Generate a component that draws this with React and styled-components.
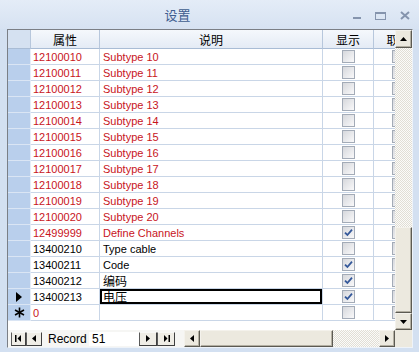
import React from "react";
import styled, { createGlobalStyle } from "styled-components";

const GlobalStyle = createGlobalStyle`
  html, body { margin: 0; padding: 0; }
  body {
    width: 419px;
    height: 352px;
    overflow: hidden;
    background: #d3e0f1;
    font-family: "Liberation Sans", Arial, sans-serif;
  }
`;

const COLS = "23px 69px 223px 51px 50px";
const RED = "#c8141c";

const records = [
	...Array.from({ length: 11 }, (_, i) => ({
		id: String(12100010 + i),
		desc: "Subtype " + (10 + i),
		red: true,
		show: false,
	})),
	{ id: "12499999", desc: "Define Channels", red: true, show: true },
	{ id: "13400210", desc: "Type cable", show: false },
	{ id: "13400211", desc: "Code", show: true },
	{ id: "13400212", desc: "编码", cjk: true, show: true },
	{ id: "13400213", desc: "电压", cjk: true, show: true, current: true },
];

const Window = styled.div`
	width: 419px;
	height: 352px;
	display: flex;
	flex-direction: column;
`;

const TitleBar = styled.div`
	height: 29px;
	display: flex;
	align-items: center;
	background: linear-gradient(#e4ecf7, #d6e2f2);
`;

const Title = styled.div`
	flex: 1;
	text-align: center;
	font: 13px "Noto Sans CJK SC", sans-serif;
	color: #3e5d8f;
	padding-left: 2px;
`;

const Controls = styled.div`
	display: flex;
	align-items: center;
	gap: 14px;
	padding: 2px 9px 0 0;
	color: #8594ad;
`;

const Frame = styled.div`
	margin: 0 6px 0 7px;
	height: 319px;
	box-sizing: border-box;
	border: 1px solid;
	border-color: #7b7f86 #eef3f9 #eef3f9 #7b7f86;
	display: flex;
	flex-direction: column;
`;

const Top = styled.div`
	height: 300px;
	display: flex;
`;

const Viewport = styled.div`
	width: 387px;
	overflow: hidden;
	background: #fff;
`;

const Row = styled.div`
	display: grid;
	grid-template-columns: ${COLS};
	width: 416px;
	height: ${(p) => (p.$head ? 19 : 16)}px;
`;

const HeadCell = styled.div`
	box-sizing: border-box;
	border-right: 1px solid #b7c7dc;
	border-bottom: 1px solid #a9bcd5;
	background: ${(p) => (p.$corner ? "#d5e1f1" : "linear-gradient(#f5f8fc, #e4ebf5)")};
	font: 12px "Noto Sans CJK SC", sans-serif;
	color: #000;
	display: flex;
	align-items: center;
	justify-content: center;
	white-space: nowrap;
	overflow: hidden;
`;

const Selector = styled.div`
	box-sizing: border-box;
	background: #b9cfec;
	border-right: 1px solid #e6eef8;
	border-bottom: 1px solid #dae5f4;
	display: flex;
	align-items: center;
	justify-content: center;
`;

const Cell = styled.div`
	box-sizing: border-box;
	border-right: 1px solid #c9d6e7;
	border-bottom: 1px solid #c9d6e7;
	padding: 0 ${(p) => p.$pad ?? 2}px;
	font: 11px "Liberation Sans", Arial, "Noto Sans CJK SC", sans-serif;
	color: ${(p) => (p.$red ? RED : "#000")};
	white-space: nowrap;
	overflow: hidden;
	display: flex;
	align-items: center;
	justify-content: ${(p) => (p.$center ? "center" : "flex-start")};
	box-shadow: ${(p) => (p.$editing ? "inset 0 0 0 2px #000" : "none")};
`;

const Cjk = styled.span`
	font: 12px "Noto Sans CJK SC", sans-serif;
`;

const Box = styled.div`
	width: 13px;
	height: 13px;
	box-sizing: border-box;
	border: 1px solid #a3abb7;
	background: linear-gradient(135deg, #d6d8dc, #f9f9fa);
	display: flex;
	align-items: center;
	justify-content: center;
`;

const checker = `
	background-color: #fbfbf9;
	background-image: repeating-conic-gradient(#e1ded5 0% 25%, transparent 0% 50%);
	background-size: 2px 2px;
`;

const VScroll = styled.div`
	width: 17px;
	display: flex;
	flex-direction: column;
	${checker}
`;

const Track = styled.div`
	flex: 1;
`;

const ScrollBtn = styled.div`
	box-sizing: border-box;
	width: ${(p) => p.$w ?? 17}px;
	height: ${(p) => p.$h ?? 17}px;
	flex: none;
	background: #ece9df;
	border: 1px solid;
	border-color: #f4f2ec #5c5a52 #5c5a52 #f4f2ec;
	box-shadow: inset -1px -1px #b3afa2;
	display: flex;
	align-items: center;
	justify-content: center;
`;

const NavBar = styled.div`
	height: 17px;
	display: flex;
	align-items: stretch;
	background: #f6f6f4;
`;

const Nav = styled.div`
	width: 176px;
	display: flex;
	align-items: center;
	padding-left: 3px;
	box-sizing: border-box;
`;

const NavBtn = styled.div`
	box-sizing: border-box;
	width: ${(p) => p.$w}px;
	height: 14px;
	background: #efede6;
	border: 1px solid;
	border-color: #f8f8f6 #3f3f3f #3f3f3f #5a5a5a;
	display: flex;
	align-items: center;
	justify-content: center;
`;

const Label = styled.span`
	font: 12px "Liberation Sans", Arial, sans-serif;
	color: #000;
	margin-left: 6px;
	width: 41px;
`;

const RecNum = styled.div`
	width: 50px;
	height: 14px;
	box-sizing: border-box;
	background: #fff;
	padding-left: 3px;
	font: 12px/14px "Liberation Sans", Arial, sans-serif;
	color: #000;
`;

const HScroll = styled.div`
	flex: 1;
	display: flex;
	${checker}
`;

const Corner = styled.div`
	width: 17px;
	background: #ece9df;
`;

const Tri = ({ dir, size = 7 }) => {
	const h = size / 2 + 0.5;
	const pts = {
		up: `0,${h} ${size},${h} ${size / 2},0`,
		down: `0,0 ${size},0 ${size / 2},${h}`,
		left: `${h},0 ${h},${size} 0,${size / 2}`,
		right: `0,0 0,${size} ${h},${size / 2}`,
	}[dir];
	const vert = dir === "up" || dir === "down";
	return (
		<svg width={vert ? size : h} height={vert ? h : size}>
			<polygon points={pts} fill="#000" />
		</svg>
	);
};

const Bar = ({ side }) => (
	<svg width="7" height="7">
		{side === "left" ? (
			<>
				<rect x="0" y="0" width="1.5" height="7" fill="#000" />
				<polygon points="6,0 6,7 2.5,3.5" fill="#000" />
			</>
		) : (
			<>
				<polygon points="1,0 1,7 4.5,3.5" fill="#000" />
				<rect x="5.5" y="0" width="1.5" height="7" fill="#000" />
			</>
		)}
	</svg>
);

const Check = () => (
	<svg width="9" height="9" viewBox="0 0 9 9">
		<path d="M1 4.6 L3.4 7 L8 1.6" fill="none" stroke="#34589a" strokeWidth="1.8" />
	</svg>
);

const Checkbox = ({ checked }) => <Box>{checked && <Check />}</Box>;

const Pointer = () => (
	<svg width="6" height="10">
		<polygon points="0,0 6,5 0,10" fill="#000" />
	</svg>
);

const Star = () => (
	<svg width="11" height="11" viewBox="0 0 11 11">
		<g stroke="#000" strokeWidth="1.6">
			<line x1="5.5" y1="0.5" x2="5.5" y2="10.5" />
			<line x1="1" y1="3" x2="10" y2="8" />
			<line x1="1" y1="8" x2="10" y2="3" />
		</g>
	</svg>
);

function Record({ r }) {
	return (
		<Row>
			<Selector>{r.current && <Pointer />}</Selector>
			<Cell $red={r.red}>{r.id}</Cell>
			<Cell $red={r.red} $pad={3} $editing={r.current}>
				{r.cjk ? <Cjk>{r.desc}</Cjk> : r.desc}
			</Cell>
			<Cell $center>
				<Checkbox checked={r.show} />
			</Cell>
			<Cell $center>
				<Checkbox />
			</Cell>
		</Row>
	);
}

export default function App() {
	return (
		<Window>
			<GlobalStyle />
			<TitleBar>
				<Title>设置</Title>
				<Controls>
					<svg width="8" height="8">
						<rect x="0" y="5" width="8" height="2" fill="currentColor" />
					</svg>
					<svg width="11" height="8">
						<rect x="0.5" y="0.5" width="10" height="7" fill="none" stroke="currentColor" />
						<rect x="0" y="0" width="11" height="2" fill="currentColor" />
					</svg>
					<svg width="10" height="9">
						<path d="M1 1 L9 8 M9 1 L1 8" stroke="currentColor" strokeWidth="2" />
					</svg>
				</Controls>
			</TitleBar>
			<Frame>
				<Top>
					<Viewport>
						<Row $head>
							<HeadCell $corner />
							<HeadCell>属性</HeadCell>
							<HeadCell>说明</HeadCell>
							<HeadCell>显示</HeadCell>
							<HeadCell>取消</HeadCell>
						</Row>
						{records.map((r) => (
							<Record key={r.id} r={r} />
						))}
						<Row>
							<Selector>
								<Star />
							</Selector>
							<Cell $red>0</Cell>
							<Cell />
							<Cell $center>
								<Checkbox />
							</Cell>
							<Cell $center>
								<Checkbox />
							</Cell>
						</Row>
					</Viewport>
					<VScroll>
						<ScrollBtn $h={18}>
							<Tri dir="up" />
						</ScrollBtn>
						<Track />
						<ScrollBtn $h={86} />
						<ScrollBtn>
							<Tri dir="down" />
						</ScrollBtn>
					</VScroll>
				</Top>
				<NavBar>
					<Nav>
						<NavBtn $w={15}>
							<Bar side="left" />
						</NavBtn>
						<NavBtn $w={16}>
							<Tri dir="left" />
						</NavBtn>
						<Label>Record</Label>
						<RecNum>51</RecNum>
						<NavBtn $w={18}>
							<Tri dir="right" />
						</NavBtn>
						<NavBtn $w={18}>
							<Bar side="right" />
						</NavBtn>
					</Nav>
					<HScroll>
						<ScrollBtn $w={16}>
							<Tri dir="left" />
						</ScrollBtn>
						<ScrollBtn $w={133} />
						<Track />
						<ScrollBtn $w={16}>
							<Tri dir="right" />
						</ScrollBtn>
					</HScroll>
					<Corner />
				</NavBar>
			</Frame>
		</Window>
	);
}
